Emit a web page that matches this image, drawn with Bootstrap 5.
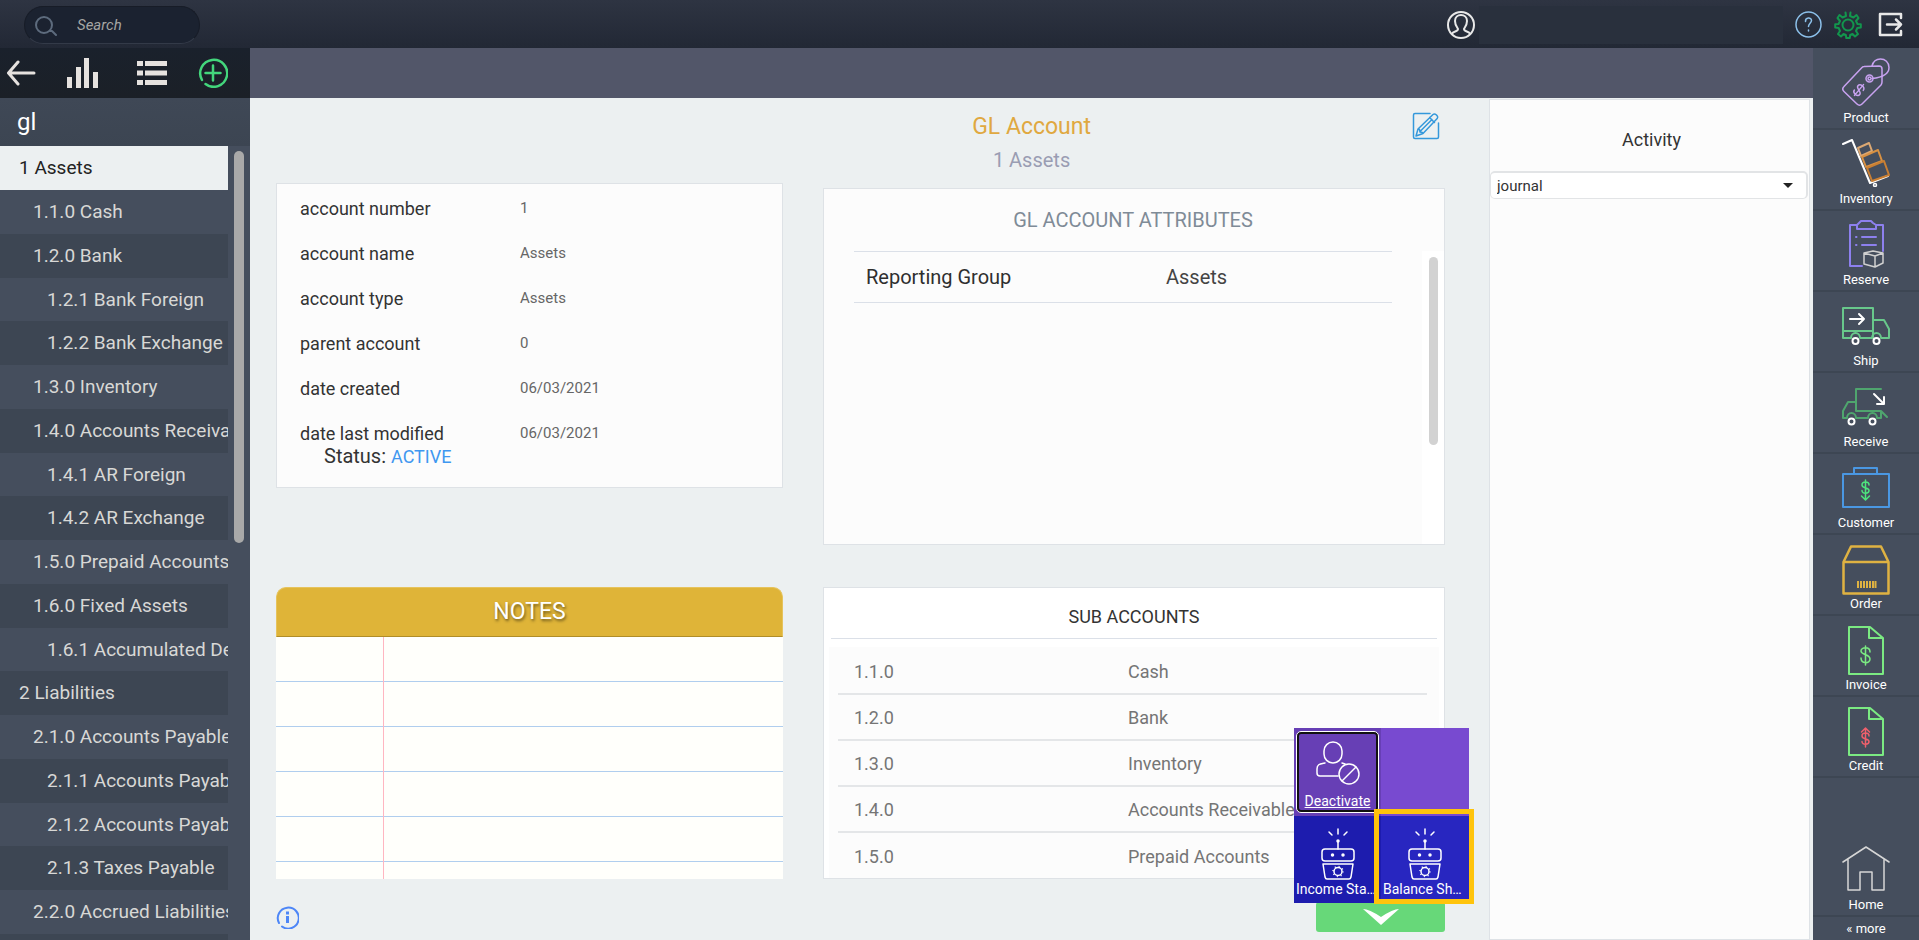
<!DOCTYPE html>
<html lang="en">
<head>
<meta charset="utf-8">
<meta name="viewport" content="width=device-width, initial-scale=1">
<title>GL Account</title>
<link href="https://cdn.jsdelivr.net/npm/bootstrap@5.3.0/dist/css/bootstrap.min.css" rel="stylesheet">
<style>
:root { --slate: #454e5d; --slate-dark: #3d4653; --rule: #dee2e6; --rule-blue: #dbe0e8; }
body { font-family: Roboto, "Liberation Sans", sans-serif; color: #333; background: #ecf0f1; }
a { color: inherit; text-decoration: none; }
svg { display: block; fill: none; stroke: currentColor; stroke-linecap: round; stroke-linejoin: round; flex: none; }
svg.solid { fill: currentColor; stroke: none; }
.icon-btn { border: 0; background: none; padding: 0; color: inherit; }

/* top bar */
.topbar { height: 48px; padding-top: 1px; background: linear-gradient(#2e3442, #222835); color: #e8e8e8; }
.search-pill { width: 176px; height: 38px; border-radius: 19px; background: #1b2230; border: 1px solid #171c27; border-bottom-color: #333a48; padding: 2px 0 0 10px; color: #5d6b7d; }
.search-pill input { font-size: 15px; font-style: italic; color: #ccc; background: none; border: 0; outline: 0; width: 110px; padding: 0; }
.search-pill input::placeholder { color: #a5a5a3; opacity: 1; }
.user-box { width: 304px; height: 38px; background: #29303d; }

/* left navigation */
.side { width: 250px; background: var(--slate); }
.tools { height: 50px; background: linear-gradient(#1a212c, #1b2027); color: #e6e2df; padding: 0 22px 0 6px; }
.tools .plus { color: #43d67c; }
.side-title { height: 48px; font-size: 24px; line-height: 48px; padding-left: 17px; color: #fff; background: linear-gradient(#3f4856, #3c4552); }
.acct-list { width: 228px; overflow: hidden; font-size: 19px; line-height: 43px; color: #d8d8d6; }
.acct-list a { display: block; height: 44px; padding-left: 33px; white-space: nowrap; overflow: hidden; background: var(--slate); }
.acct-list li:nth-child(4n) a { height: 43px; }
.acct-list li:nth-child(odd) a { background: var(--slate-dark); }
.acct-list .lv1 { padding-left: 19px; }
.acct-list .lv3 { padding-left: 47px; }
.acct-list li a.current { background: #ecf0f1; color: #222; }
.thumb { border-radius: 5px; }
.side .thumb { width: 10px; height: 392px; margin: 5px 6px 0; background: #a9a9a9; }

/* work area */
.purple-strip { height: 50px; background: #525669; }
.work { padding: 0 44px 0 26px; }
.head { height: 85px; }
.head h1 { font-size: 23px; font-weight: 400; line-height: 28px; color: #e0a840; margin: 15px 0 5px; }
.head h2 { font-size: 20px; font-weight: 400; line-height: 28px; color: #9a9db3; margin: 0; }
.head-tools { width: 354px; }
.edit { color: #3498db; margin: 14px 5px 0 0; height: 28px; }
.panels { display: grid; grid-template-columns: 507fr 622fr; grid-template-rows: 362fr 292fr; gap: 42px 40px; min-height: 0; }
.panels > * { min-height: 0; overflow: hidden; }
.sheet { background: #fcfcfc; border: 1px solid var(--rule); }
.info th { font-weight: 400; font-size: 18px; width: 243px; padding: 0 0 0 23px; line-height: 45px; }
.info td { font-size: 15px; line-height: 45px; color: #666; padding: 0; }
.info tr { height: 45px; }
.info-card { padding-top: 2px; height: 305px; }
.status { font-size: 20px; line-height: 24px; padding-left: 47px; margin-top: -12px; }
.status a { font-size: 18px; color: #3f97f0; }
.attr-card { margin-top: 5px; }
.attr-card h3 { font-size: 20px; line-height: 62px; font-weight: 400; color: #7f8b97; text-align: center; margin: 0; padding-right: 2px; }
.attr-body { padding: 0 30px; }
.attr-card table { font-size: 20px; line-height: 50px; }
.attr-card table tr { border: 1px solid var(--rule-blue); border-width: 1px 0; }
.attr-card th { font-weight: 400; width: 312px; padding: 0 0 0 12px; color: #2f2f2f; }
.attr-card td { padding: 0; color: #444; }
.attr-card .rail { width: 22px; background: #fff; }
.attr-card .thumb { width: 9px; height: 188px; margin: 6px auto 0; background: #d2d2d2; }
.notes-title { height: 50px; border-radius: 10px 10px 0 0; background: #dfb438; border: 1px solid #e6c35c; border-bottom-color: #b08d28; color: #fff; font-size: 23px; font-weight: 400; line-height: 47px; text-shadow: 1px 2px 3px #00000080; margin: 0; text-align: center; }
.notes-pad { flex: 1; border: 0; resize: none; width: 100%; outline: 0; padding: 0 16px 0 120px; line-height: 45px; background: linear-gradient(90deg, transparent 107px, #ffb6c1 107px 108px, transparent 108px), repeating-linear-gradient(#fffffb 0 44px, #b0ceee 44px 45px); }
.sub-card { background: #fff; padding: 0 5px; }
.sub-card h3 { font-size: 18px; line-height: 42px; padding-top: 8px; font-weight: 400; text-align: center; margin: 0 2px 8px; border-bottom: 1px solid var(--rule-blue); color: #333; }
.sub-scroll { background: #fcfcfc; padding: 1px 12px 0 9px; }
.sub-card table { font-size: 18px; color: #757575; }
.sub-card tr { height: 46px; border-bottom: 2px solid #e4e6e8; }
.sub-card tr:last-child { border: 0; }
.sub-card td { padding: 2px 0 0; line-height: 42px; }
.sub-card td:first-child { width: 290px; padding-left: 16px; }
.foot { height: 61px; }
.about { color: #4d86f7; }
.drop { width: 129px; height: 30px; border-radius: 3px; background: #67d879; margin-top: 23px; color: #fff; }

/* action tiles floating above the green button */
.tiles { right: -24px; bottom: 37px; width: 175px; background: #784ad0; display: grid; grid-template-columns: 87px 88px; grid-template-rows: 88px 87px; }
.tile { color: #fff; font-size: 14px; line-height: 18px; text-align: center; white-space: nowrap; min-width: 0; }
.tile.off { background: #673fb5; padding: 3px 2px 3px 2px; }
.off-ring { border: 1px solid #fff; border-radius: 5px; height: 100%; background: #111; padding: 2px; }
.off-face { background: #673fb5; border-radius: 2px; height: 100%; padding-top: 7px; text-decoration: underline; }
.off-face svg { margin: 0 auto 7px; }
.tile.bot { background: #1d1cae; padding: 12px 2px 0; grid-row: 2; }
.tile.bot span { display: block; overflow: hidden; text-overflow: ellipsis; padding-right: 3px; }
.tile.bot + .tile.bot { background: #2826c0; }
.picked { right: -29px; bottom: 36px; width: 100px; height: 95px; border: 5px solid #ffc40c; pointer-events: none; }

/* activity */
.activity { width: 321px; margin-right: 3px; background: #fcfcfc; border: 1px solid var(--rule); margin-top: 1px; padding-right: 1px; }
.activity h3 { font-size: 18px; font-weight: 400; line-height: 26px; margin: 0; padding: 27px 0 18px 5px; text-align: center; }
.activity .form-select { height: 28px; padding: 1px 8px 1px 6px; font-size: 15px; line-height: 20px; color: #333; border: 1px solid #e2e4e6; border-width: 2px 2px 1px 1px; border-radius: 5px; background: #fff url("data:image/svg+xml,%3Csvg xmlns='http://www.w3.org/2000/svg' viewBox='0 0 10 5'%3E%3Cpath fill='%23222' d='M0 0h10L5 5z'/%3E%3C/svg%3E") no-repeat right 13px center / 10px 5px; }

/* right rail */
.dock { width: 106px; background: var(--slate); color: #fff; font-size: 13px; line-height: 18px; padding-top: 1px; }
.dock a { display: flex; flex-direction: column; align-items: center; justify-content: flex-end; height: 81px; border-bottom: 2px solid var(--slate-dark); padding-bottom: 1px; gap: 3px; color: #fff; }
.dock a.snug { gap: 0; }
.dock a.more { height: 23px; border: 0; padding-bottom: 2px; }
</style>
</head>
<body class="vh-100 d-flex flex-column overflow-hidden">

<svg width="0" height="0" class="position-absolute" aria-hidden="true">
  <symbol id="bot" viewBox="0 0 36 52">
    <path d="M9 4l3 3M18 1v5M27 4l-3 3M18 13v8"/>
    <circle cx="18" cy="13" r="1" fill="currentColor"/>
    <rect x="2" y="21" width="32" height="12" rx="3"/>
    <circle cx="12.500" cy="27" r="1" fill="currentColor"/><circle cx="23" cy="27" r="1" fill="currentColor"/>
    <path d="M3 36h30l-2 13q-.5 2-2 2H7q-1.500 0-2-2z"/>
    <circle cx="18" cy="43.500" r="4"/><circle cx="18" cy="43.500" r="5" stroke-width="1.500" stroke-dasharray="1 2.930" stroke-linecap="butt"/>
  </symbol>
</svg>

<header class="topbar d-flex align-items-center flex-shrink-0">
  <label class="search-pill d-flex align-items-center ms-4">
    <svg width="22" height="22" viewBox="0 0 22 22" stroke-width="2"><circle cx="9" cy="10" r="8"/><path d="M15 16h2l4 4"/></svg>
    <input type="text" class="ms-3 ps-1" placeholder="Search" aria-label="Search">
  </label>
  <div class="d-flex align-items-center ms-auto pe-3">
    <svg width="28" height="28" viewBox="0 0 28 28" stroke-width="2"><circle cx="14" cy="14" r="13"/><path d="M5 23c1-3 6-2 6-5 0-1-3-3-3-8 0-4 3-6 6-6s6 2 6 6c0 5-3 7-3 8 0 3 5 2 6 5"/></svg>
    <div class="user-box ms-1"></div>
    <button class="icon-btn ms-2 ps-1" aria-label="Help" style="color:#8cc0ea"><svg width="27" height="27" viewBox="0 0 27 27" stroke-width="1.500"><circle cx="13.500" cy="13.500" r="12.500"/><path d="M10.500 10.500c-.3-4.500 6-4.500 6-1 0 2.500-3 3-3 6M13.500 19v1"/></svg></button>
    <button class="icon-btn ms-2 ps-1" aria-label="Settings" style="color:#12964d"><svg width="28" height="28" viewBox="0 0 28 28" stroke-width="2"><circle cx="14" cy="14" r="5.500"/><path d="M11.500 1.500L12 5 8.500 6.500 5.500 4 3.500 7l2.500 3-1.500 3-3.300.3v3.200l3.500.5 1.300 3L4 23l3 2.500L9.500 23l2.300 1 .5 3h3.400l.5-3 2.300-1 2.500 2.500L24 23l-2-3 1.300-3 3.500-.5v-3.200L23.500 13 22 10l2.500-3-2-3-3 2.500L16 5l.5-3.500"/></svg></button>
    <button class="icon-btn ms-3" aria-label="Sign out"><svg width="25" height="25" viewBox="0 0 25 25" stroke-width="2.500"><path d="M23 6V2H2v21h21v-4M9 12.500h14M18 7.500l5 5-5 5"/></svg></button>
  </div>
</header>

<div class="d-flex flex-grow-1" style="min-height:0">
  <nav class="side d-flex flex-column flex-shrink-0">
    <div class="tools d-flex align-items-center justify-content-between flex-shrink-0">
      <button class="icon-btn" aria-label="Back"><svg width="30" height="26" viewBox="0 0 30 26" stroke-width="3"><path d="M28 13H3M12 2L2.500 13 12 24"/></svg></button>
      <button class="icon-btn" aria-label="Charts"><svg class="solid" width="31" height="30" viewBox="0 0 31 30"><path d="M0 19h5v11H0zM9 9h5v21H9zM17 0h5v30h-5zM26 14h5v16h-5z"/></svg></button>
      <button class="icon-btn ms-2" aria-label="List"><svg class="solid" width="30" height="25" viewBox="0 0 30 25"><path d="M0 0h6v5H0zM8 0h22v5H8zM0 9.500h6v5H0zM8 9.500h22v5H8zM0 19h6v5H0zM8 19h22v5H8z"/></svg></button>
      <button class="icon-btn plus" aria-label="Add"><svg width="30" height="30" viewBox="0 0 30 30" stroke-width="2.500"><path d="M4 22A13.500 13.500 0 1 1 7.500 26M15 7.500v15M7.500 15h15"/></svg></button>
    </div>
    <div class="side-title flex-shrink-0">gl</div>
    <div class="d-flex flex-grow-1 overflow-hidden">
      <ul class="acct-list list-unstyled mb-0">
        <li><a href="#" class="lv1 current">1 Assets</a></li>
        <li><a href="#">1.1.0 Cash</a></li>
        <li><a href="#">1.2.0 Bank</a></li>
        <li><a href="#" class="lv3">1.2.1 Bank Foreign</a></li>
        <li><a href="#" class="lv3">1.2.2 Bank Exchange</a></li>
        <li><a href="#">1.3.0 Inventory</a></li>
        <li><a href="#">1.4.0 Accounts Receivables</a></li>
        <li><a href="#" class="lv3">1.4.1 AR Foreign</a></li>
        <li><a href="#" class="lv3">1.4.2 AR Exchange</a></li>
        <li><a href="#">1.5.0 Prepaid Accounts</a></li>
        <li><a href="#">1.6.0 Fixed Assets</a></li>
        <li><a href="#" class="lv3">1.6.1 Accumulated Depreciation</a></li>
        <li><a href="#" class="lv1">2 Liabilities</a></li>
        <li><a href="#">2.1.0 Accounts Payable</a></li>
        <li><a href="#" class="lv3">2.1.1 Accounts Payable Foreign</a></li>
        <li><a href="#" class="lv3">2.1.2 Accounts Payable Exchange</a></li>
        <li><a href="#" class="lv3">2.1.3 Taxes Payable</a></li>
        <li><a href="#">2.2.0 Accrued Liabilities</a></li>
        <li><a href="#" aria-label="Next account"></a></li>
      </ul>
      <div class="thumb"></div>
    </div>
  </nav>

  <div class="d-flex flex-column flex-grow-1" style="min-width:0">
    <div class="purple-strip flex-shrink-0"></div>
    <div class="d-flex flex-grow-1" style="min-height:0">
      <main class="work d-flex flex-column flex-grow-1">
        <div class="head d-flex justify-content-end flex-shrink-0">
          <div class="text-center"><h1>GL Account</h1><h2>1 Assets</h2></div>
          <div class="head-tools d-flex justify-content-end"><button class="icon-btn edit" aria-label="Edit"><svg width="28" height="28" viewBox="0 0 28 28" stroke-width="1.500"><path d="M18 1.500H3Q1.500 1.500 1.500 3v22q0 1.500 1.500 1.500h22q1.500 0 1.500-1.500V11"/><path d="M4 24l2-7L21 2.500q1.500-1.200 3.200.3l.8.8q1.400 1.500.2 3L11 21.500zM6 17l1.500.5.5 2.500 2.500.5.5 1M8.500 19L20 7.500M17.500 5.500l5 5"/></svg></button></div>
        </div>

        <div class="panels flex-grow-1">
          <section class="sheet info-card">
            <table class="info w-100">
              <tr><th scope="row">account number</th><td>1</td></tr>
              <tr><th scope="row">account name</th><td>Assets</td></tr>
              <tr><th scope="row">account type</th><td>Assets</td></tr>
              <tr><th scope="row">parent account</th><td>0</td></tr>
              <tr><th scope="row">date created</th><td>06/03/2021</td></tr>
              <tr><th scope="row">date last modified</th><td>06/03/2021</td></tr>
            </table>
            <div class="status">Status: <a href="#">ACTIVE</a></div>
          </section>

          <section class="sheet attr-card d-flex flex-column">
            <h3>GL ACCOUNT ATTRIBUTES</h3>
            <div class="d-flex flex-grow-1">
              <div class="attr-body flex-grow-1"><table class="w-100"><tr><th scope="row">Reporting Group</th><td>Assets</td></tr></table></div>
              <div class="rail"><div class="thumb"></div></div>
            </div>
          </section>

          <section class="d-flex flex-column">
            <h3 class="notes-title">NOTES</h3>
            <textarea class="notes-pad" aria-label="Notes"></textarea>
          </section>

          <section class="sheet sub-card d-flex flex-column">
            <h3>SUB ACCOUNTS</h3>
            <div class="sub-scroll flex-grow-1 overflow-hidden">
              <table class="w-100">
                <tr><td>1.1.0</td><td>Cash</td></tr>
                <tr><td>1.2.0</td><td>Bank</td></tr>
                <tr><td>1.3.0</td><td>Inventory</td></tr>
                <tr><td>1.4.0</td><td>Accounts Receivables</td></tr>
                <tr><td>1.5.0</td><td>Prepaid Accounts</td></tr>
              </table>
            </div>
          </section>
        </div>

        <div class="foot d-flex justify-content-between flex-shrink-0 position-relative">
          <button class="icon-btn about align-self-center pt-3" aria-label="Information"><svg width="23" height="23" viewBox="0 0 23 23" stroke-width="2"><path d="M3 17A10.500 10.500 0 1 1 6 20.500"/><path stroke-width="3" stroke-linecap="butt" d="M11.500 10v7M11.500 5.500v3"/></svg></button>
          <button class="icon-btn drop d-flex justify-content-center align-items-center" aria-label="Close actions"><svg class="solid" width="36" height="16" viewBox="0 0 36 16"><path d="M0 0q6 0 18 8Q30 0 36 0L18 16z"/></svg></button>
          <div class="tiles position-absolute">
            <a href="#" class="tile off"><div class="off-ring"><div class="off-face">
              <svg width="44" height="44" viewBox="0 0 44 44" stroke-width="1.500"><rect x="8" y="1" width="18" height="21" rx="9"/><path d="M9 22c-5 1-8 1-8 6v4q0 3 3 3h18M26 22l3 1"/><circle cx="33" cy="33" r="10"/><path d="M26 40l14-14"/></svg>
              Deactivate</div></div></a>
            <a href="#" class="tile bot"><svg class="mx-auto" width="36" height="52" stroke-width="1.500"><use href="#bot"/></svg><span>Income Statement</span></a>
            <a href="#" class="tile bot"><svg class="mx-auto" width="36" height="52" stroke-width="1.500"><use href="#bot"/></svg><span>Balance Sheet</span></a>
          </div>
          <div class="picked position-absolute"></div>
        </div>
      </main>

      <aside class="activity flex-shrink-0">
        <h3>Activity</h3>
        <select class="form-select" aria-label="Activity type"><option>journal</option></select>
      </aside>
    </div>
  </div>

  <nav class="dock d-flex flex-column flex-shrink-0">
    <a href="#"><svg width="48" height="48" viewBox="0 0 48 48" stroke-width="1.500"><g stroke="#c8a2f0"><path d="M22 8.500L37 8q3 0 3 3v13q0 1.500-1 3L20 46q-2.500 2.500-5 0L2 33.500q-2.500-2.500 0-5L20 9.500q1-1 2-1z"/><circle cx="27.500" cy="20.500" r="3.500"/><circle cx="27.500" cy="20.500" r="1.500"/><path d="M30 20.500c9-1 17-4 17-11C47 4 43 1 38.500 1 34 1 31 4 30 8"/><path transform="rotate(40 17 32)" d="M20.500 29.500c0-4-7-3.500-7 0s7 2 7 5.500-7 3.500-7 0M17 25v14"/></g></svg>Product</a>
    <a href="#"><svg width="48" height="48" viewBox="0 0 48 48" stroke-width="2"><path d="M1 5l9-4 18 43M28 44l18-7"/><circle cx="33" cy="46" r="1.500" stroke-width="1.500"/><path stroke="#dba873" d="M16 9l11-5 3 8-11 5z"/><path stroke="#d89143" d="M20 18l16-7 4 11-16 6z"/><path stroke="#c97f33" d="M25 29l17-7 5 14-17 6z"/></svg>Inventory</a>
    <a href="#"><svg width="48" height="48" viewBox="0 0 48 48" stroke-width="2"><path stroke="#8d80ee" d="M15 5H8v41h12M34 5h7v26M17 3l2-2h10l2 2 3 2v4H15V5zM20 17h14M20 25h14M14 17h.5M14 25h.5"/><path stroke="#d0d0d0" stroke-width="1.500" d="M22 33l9-2 10 2-8 3zM22 33v11l11 3V36M33 47l8-4V33"/></svg>Reserve</a>
    <a href="#"><svg width="48" height="48" viewBox="0 0 48 48" stroke-width="2"><path stroke="#68c88b" d="M9 37H1V7h30v30H18M1 30h30M31 19h11l5 9v9h-7M31 37h-1M9 37a4.500 5 0 0 1 9 0M30 37a4.500 5 0 0 1 9 0"/><path stroke="#fff" d="M8 18h14M17 13l5 5-5 5"/><circle stroke="#fff" cx="13.500" cy="40" r="3"/><circle stroke="#fff" cx="34.500" cy="40" r="3"/></svg>Ship</a>
    <a href="#"><svg width="48" height="48" viewBox="0 0 48 48" stroke-width="2"><path stroke="#4fa56e" d="M39 7H14v22h25v7h-4M14 20H6l-5 9v7h4M39 29l6 6M5 36a4.500 5 0 0 1 9 0h12a4.500 5 0 0 1 9 0"/><path stroke="#fff" d="M32 12l10 10M42 15v7h-7"/><circle stroke="#fff" cx="9.500" cy="39.500" r="3"/><circle stroke="#fff" cx="30.500" cy="39.500" r="3"/></svg>Receive</a>
    <a href="#"><svg width="48" height="48" viewBox="0 0 48 48" stroke-width="2"><path stroke="#4a97e2" d="M1 11h46v33H1zM12 11V5h23v6"/><path stroke="#4ee57e" stroke-width="1.500" d="M27 22c0-4-7-4-7 0s7 2 7 5.500-7 4-7 0M23.500 17v19M19.500 33l4 4 4-4"/></svg>Customer</a>
    <a href="#" class="snug"><svg width="48" height="50" viewBox="0 0 48 50" stroke-width="2.500"><path stroke="#dfb242" d="M1.500 17L9 1.500h30L46.500 17v31.500h-45zM2 17h44"/><path stroke="#dfb242" stroke-width="2" stroke-linecap="butt" d="M16 36v7M19 36v7M22 36v7M25 36v7M28 36v7M31 36v7M33.500 36v7"/></svg>Order</a>
    <a href="#" class="snug"><svg width="48" height="50" viewBox="0 0 48 50" stroke-width="2"><path stroke="#7bea82" d="M7 1h21l13 11v36H7zM27 2v10h13"/><path stroke="#7bea82" stroke-width="1.500" d="M28 26c0-6-9-5-9-1s9 3 9 8-9 5-9-1M23.500 20v19"/></svg>Invoice</a>
    <a href="#" class="snug"><svg width="48" height="50" viewBox="0 0 48 50" stroke-width="2"><path stroke="#7bea82" d="M7 1h21l13 11v36H7zM27 2v10h13"/><path stroke="#f0606c" stroke-width="1.500" d="M27 29c0-4-7-4-7 0s7 2 7 5.500-7 4-7 0M23.500 40V21M19.500 25l4-4 4 4"/></svg>Credit</a>
    <a href="#" class="mt-auto"><svg width="48" height="48" viewBox="0 0 48 48" stroke-width="1.500"><path stroke="#d6d6d6" d="M1 17L24 2l23 15M6 14v31h12V27h12v18h12V14"/></svg>Home</a>
    <a href="#" class="more">« more</a>
  </nav>
</div>

<script src="https://cdn.jsdelivr.net/npm/bootstrap@5.3.0/dist/js/bootstrap.bundle.min.js"></script>
</body>
</html>
